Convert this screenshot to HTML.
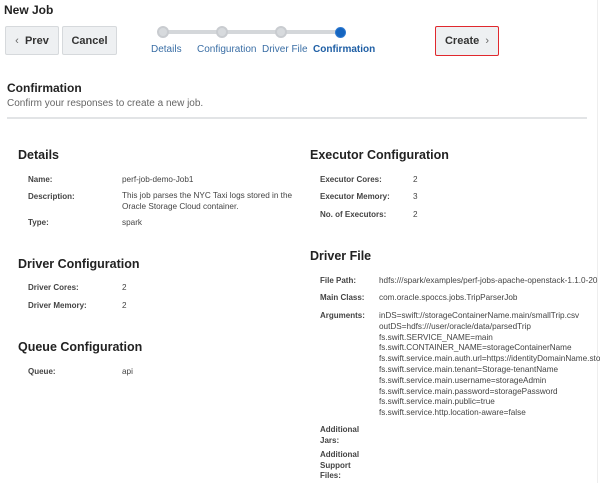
<!DOCTYPE html>
<html><head><meta charset="utf-8"><style>
*{margin:0;padding:0;box-sizing:border-box}
body{width:600px;height:483px;background:#fff;font-family:"Liberation Sans",Arial,sans-serif;position:relative;overflow:hidden;color:#333}
.a{position:absolute;white-space:nowrap}
.btn{position:absolute;background:#eef0f2;border:1px solid #d6d9dc;font-weight:bold;font-size:11px;color:#333;text-align:center;line-height:29px;border-radius:2px}
.h{position:absolute;font-weight:bold;font-size:12.5px;color:#222;white-space:nowrap}
.l{position:absolute;font-weight:bold;font-size:8px;color:#444;white-space:nowrap;line-height:10.5px}
.v{position:absolute;font-size:8.2px;color:#444;white-space:nowrap;line-height:10.8px}
.st{position:absolute;font-size:10px;color:#3a6ea5;white-space:nowrap}
.dot{position:absolute;width:12px;height:12px;border-radius:50%;background:#d7dadd;border:2px solid #c9ccd0}
</style></head><body>
<div class="a" style="left:4px;top:3px;font-size:12px;font-weight:bold;color:#222">New Job</div>
<div class="btn" style="left:5px;top:26px;width:54px;height:29px"><span style="font-weight:normal;color:#666">&lsaquo;</span>&nbsp; Prev</div>
<div class="btn" style="left:62px;top:26px;width:55px;height:29px">Cancel</div>
<div class="a" style="left:168px;top:30px;width:172px;height:4px;background:#d4d7da"></div>
<div class="dot" style="left:157px;top:26px"></div>
<div class="dot" style="left:216px;top:26px"></div>
<div class="dot" style="left:275px;top:26px"></div>
<div class="a" style="left:335px;top:27px;width:11px;height:11px;border-radius:50%;background:#1565c0;border:1px solid #2f7ad0"></div>
<div class="st" style="left:151px;top:44px">Details</div>
<div class="st" style="left:197px;top:44px">Configuration</div>
<div class="st" style="left:262px;top:44px">Driver File</div>
<div class="st" style="left:313px;top:44px;font-weight:bold;color:#1f5fa5">Confirmation</div>
<div class="btn" style="left:435px;top:26px;width:64px;height:30px;border:1.5px solid #e0282d">Create&nbsp; <span style="font-weight:normal;color:#666">&rsaquo;</span></div>
<div class="a" style="left:7px;top:81px;font-size:12px;font-weight:bold;color:#222">Confirmation</div>
<div class="a" style="left:7px;top:98px;font-size:10px;color:#666">Confirm your responses to create a new job.</div>
<div class="a" style="left:7px;top:117px;width:580px;height:2px;background:#e2e4e6"></div>
<div class="a" style="left:597px;top:0;width:1px;height:483px;background:#eee"></div>

<div class="h" style="left:18px;top:148px">Details</div>
<div class="l" style="left:28px;top:175px">Name:</div><div class="v" style="left:122px;top:175px">perf-job-demo-Job1</div>
<div class="l" style="left:28px;top:192px">Description:</div><div class="v" style="left:122px;top:191px">This job parses the NYC Taxi logs stored in the<br>Oracle Storage Cloud container.</div>
<div class="l" style="left:28px;top:218px">Type:</div><div class="v" style="left:122px;top:218px">spark</div>

<div class="h" style="left:18px;top:257px">Driver Configuration</div>
<div class="l" style="left:28px;top:283px">Driver Cores:</div><div class="v" style="left:122px;top:283px">2</div>
<div class="l" style="left:28px;top:301px">Driver Memory:</div><div class="v" style="left:122px;top:301px">2</div>

<div class="h" style="left:18px;top:340px">Queue Configuration</div>
<div class="l" style="left:28px;top:367px">Queue:</div><div class="v" style="left:122px;top:367px">api</div>

<div class="h" style="left:310px;top:148px">Executor Configuration</div>
<div class="l" style="left:320px;top:175px">Executor Cores:</div><div class="v" style="left:413px;top:175px">2</div>
<div class="l" style="left:320px;top:192px">Executor Memory:</div><div class="v" style="left:413px;top:192px">3</div>
<div class="l" style="left:320px;top:210px">No. of Executors:</div><div class="v" style="left:413px;top:210px">2</div>

<div class="h" style="left:310px;top:249px">Driver File</div>
<div class="l" style="left:320px;top:276px">File Path:</div><div class="v" style="left:379px;top:276px">hdfs:///spark/examples/perf-jobs-apache-openstack-1.1.0-20</div>
<div class="l" style="left:320px;top:293px">Main Class:</div><div class="v" style="left:379px;top:293px">com.oracle.spoccs.jobs.TripParserJob</div>
<div class="l" style="left:320px;top:311px">Arguments:</div>
<div class="v" style="left:379px;top:311px">inDS=swift://storageContainerName.main/smallTrip.csv<br>outDS=hdfs:///user/oracle/data/parsedTrip<br>fs.swift.SERVICE_NAME=main<br>fs.swift.CONTAINER_NAME=storageContainerName<br>fs.swift.service.main.auth.url=https://identityDomainName.storage<br>fs.swift.service.main.tenant=Storage-tenantName<br>fs.swift.service.main.username=storageAdmin<br>fs.swift.service.main.password=storagePassword<br>fs.swift.service.main.public=true<br>fs.swift.service.http.location-aware=false</div>
<div class="l" style="left:320px;top:425px">Additional<br>Jars:</div>
<div class="l" style="left:320px;top:450px">Additional<br>Support<br>Files:</div>
</body></html>
